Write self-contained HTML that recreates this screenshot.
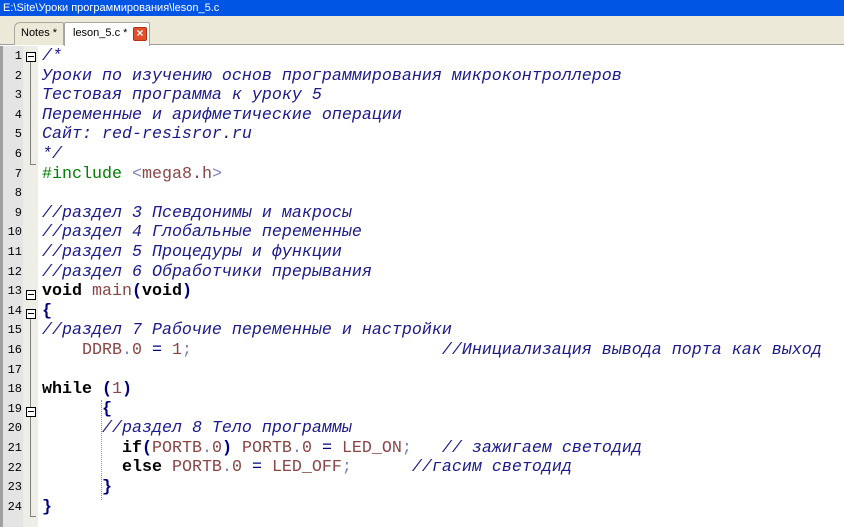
<!DOCTYPE html>
<html><head><meta charset="utf-8"><style>
*{margin:0;padding:0;box-sizing:border-box}
body{width:844px;height:527px;overflow:hidden;background:#fff;position:relative;font-family:"Liberation Sans",sans-serif}
#title{position:absolute;left:0;top:0;width:844px;height:16px;background:#0055e5;color:#fff;font-size:11px;line-height:16px;padding-left:3px}
#tabs{position:absolute;left:0;top:16px;width:844px;height:29px;background:#ece9d8;border-bottom:1px solid #a0a0a0}
.tab{position:absolute;top:6px;height:23px;font-size:11px;line-height:21px;color:#000;border:1px solid #a8a8a0;border-bottom:none}
#t1{left:14px;width:50px;background:#ece9d8;padding-left:6px;border-radius:6px 2px 0 0}
#t2{left:64px;width:86px;background:#fff;padding-left:8px;border-radius:2px 2px 0 0;height:24px}
#x{position:absolute;left:68px;top:4px;width:14px;height:14px;background:#e0502a;border:1px solid #b03010;border-radius:2px;color:#fff;font-size:12px;line-height:11px;text-align:center;font-weight:bold}
#gut{position:absolute;left:0;top:46px;width:23px;height:481px;background:#e4e4e4;border-left:3px solid #a0a0a0}
#fold{position:absolute;left:23px;top:46px;width:15px;height:481px;background:#efeee6}
.num{position:absolute;left:3px;width:19px;text-align:right;font-family:"Liberation Mono",monospace;font-size:12px;color:#000}
.box{position:absolute;left:26px;width:10px;height:10px;border:1px solid #000;background:#fff}
.box:after{content:"";position:absolute;left:1px;top:3px;width:6px;height:1px;background:#000}
.vl{position:absolute;left:30px;width:1px;background:#808080}
.hl{position:absolute;left:30px;width:6px;height:1px;background:#808080}
#code{position:absolute;left:42px;top:47px;font-family:"Liberation Mono",monospace;font-size:16.67px;line-height:19.6px;white-space:pre;color:#000}
.c{color:#1a1a8a;font-style:italic}
.k{font-weight:bold}
.r{color:#8a4545}
.o{color:#000080;font-weight:bold}
.e{color:#000080}
.g{color:#008000}
.p{color:#8080c0}
.ig{position:absolute;left:101px;width:1px;border-left:1px dotted #909090}
</style></head><body>
<div id="title">E:\Site\Уроки программирования\leson_5.c</div>
<div id="tabs"><div class="tab" id="t1">Notes *</div><div class="tab" id="t2">leson_5.c *<div id="x">×</div></div></div>
<div id="gut"></div><div id="fold"></div>
<div class="num" style="top:49px">1</div><div class="num" style="top:68.6px">2</div><div class="num" style="top:88.2px">3</div><div class="num" style="top:107.8px">4</div><div class="num" style="top:127.4px">5</div><div class="num" style="top:147px">6</div><div class="num" style="top:166.6px">7</div><div class="num" style="top:186.2px">8</div><div class="num" style="top:205.8px">9</div><div class="num" style="top:225.4px">10</div><div class="num" style="top:245px">11</div><div class="num" style="top:264.6px">12</div><div class="num" style="top:284.2px">13</div><div class="num" style="top:303.8px">14</div><div class="num" style="top:323.4px">15</div><div class="num" style="top:343px">16</div><div class="num" style="top:362.6px">17</div><div class="num" style="top:382.2px">18</div><div class="num" style="top:401.8px">19</div><div class="num" style="top:421.4px">20</div><div class="num" style="top:441px">21</div><div class="num" style="top:460.6px">22</div><div class="num" style="top:480.2px">23</div><div class="num" style="top:499.8px">24</div>
<div class="vl" style="top:62px;height:102px"></div><div class="hl" style="top:164px"></div>
<div class="vl" style="top:318px;height:198px"></div><div class="hl" style="top:516px"></div>
<div class="box" style="top:52px"></div><div class="box" style="top:290px"></div><div class="box" style="top:309px"></div><div class="box" style="top:407px"></div>
<div class="ig" style="top:400px;height:100px"></div>
<div id="code"><span class="c">/*
Уроки по изучению основ программирования микроконтроллеров
Тестовая программа к уроку 5
Переменные и арифметические операции
Сайт: red-resisror.ru
*/</span>
<span class="g">#include </span><span class="p">&lt;</span><span class="r">mega8.h</span><span class="p">&gt;</span>

<span class="c">//раздел 3 Псевдонимы и макросы</span>
<span class="c">//раздел 4 Глобальные переменные</span>
<span class="c">//раздел 5 Процедуры и функции</span>
<span class="c">//раздел 6 Обработчики прерывания</span>
<span class="k">void</span> <span class="r">main</span><span class="o">(</span><span class="k">void</span><span class="o">)</span>
<span class="o">{</span>
<span class="c">//раздел 7 Рабочие переменные и настройки</span>
    <span class="r">DDRB</span><span class="p">.</span><span class="r">0</span> <span class="e">=</span> <span class="r">1</span><span class="p">;</span>                         <span class="c">//Инициализация вывода порта как выход</span>

<span class="k">while</span> <span class="o">(</span><span class="r">1</span><span class="o">)</span>
      <span class="o">{</span>
      <span class="c">//раздел 8 Тело программы</span>
        <span class="k">if</span><span class="o">(</span><span class="r">PORTB</span><span class="p">.</span><span class="r">0</span><span class="o">)</span> <span class="r">PORTB</span><span class="p">.</span><span class="r">0</span> <span class="e">=</span> <span class="r">LED_ON</span><span class="p">;</span>   <span class="c">// зажигаем светодид</span>
        <span class="k">else</span> <span class="r">PORTB</span><span class="p">.</span><span class="r">0</span> <span class="e">=</span> <span class="r">LED_OFF</span><span class="p">;</span>      <span class="c">//гасим светодид</span>
      <span class="o">}</span>
<span class="o">}</span></div>
</body></html>
